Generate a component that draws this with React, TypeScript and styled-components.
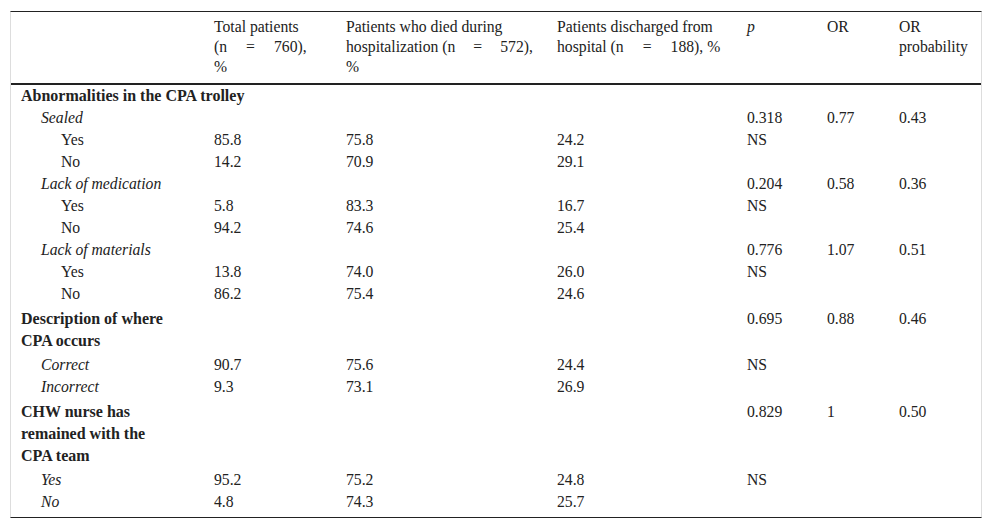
import styled, { createGlobalStyle } from "styled-components";

const GlobalStyle = createGlobalStyle`
  html, body {
    margin: 0;
    padding: 0;
    background: #fff;
  }
  body {
    font-family: "Liberation Serif", "Times New Roman", serif;
    color: #222;
  }
`;

const Page = styled.div`
  padding: 11px 10px 0;
`;

const Frame = styled.div`
  border-top: 1px solid #222;
  border-bottom: 1px solid #222;
  border-left: 1px solid #ddd;
  border-right: 1px solid #ddd;
`;

const Table = styled.table`
  width: 100%;
  border-collapse: collapse;
  table-layout: fixed;
  font-size: 15.7px;
`;

const HeadCell = styled.th<{ $italic?: boolean }>`
  text-align: left;
  vertical-align: top;
  font-weight: normal;
  font-style: ${(p) => (p.$italic ? "italic" : "normal")};
  line-height: 20px;
  padding: 5px 10px 6px;
  border-bottom: 2px solid #222;
  white-space: nowrap;
`;

const Eq = styled.span<{ $gap: number }>`
  margin: 0 ${(p) => p.$gap}px;
`;

const Cell = styled.td<{ $pad?: boolean; $last?: boolean }>`
  vertical-align: top;
  line-height: 22px;
  padding: ${(p) => (p.$pad ? "3px" : "0")} 10px
    ${(p) => (p.$last ? "4px" : p.$pad ? "2px" : "0")};
  white-space: nowrap;
`;

const Label = styled.span<{ $level: number; $bold?: boolean; $italic?: boolean }>`
  display: block;
  padding-left: ${(p) => p.$level * 20}px;
  font-weight: ${(p) => (p.$bold ? "bold" : "normal")};
  font-size: ${(p) => (p.$bold ? "16px" : "inherit")};
  font-style: ${(p) => (p.$italic ? "italic" : "normal")};
`;

type Kind = "head" | "cat" | "opt";

interface Row {
  label: string[];
  kind: Kind;
  cells?: string[];
  span?: boolean;
}

const rows: Row[] = [
  { label: ["Abnormalities in the CPA trolley"], kind: "head", span: true },
  { label: ["Sealed"], kind: "cat", cells: ["", "", "", "0.318", "0.77", "0.43"] },
  { label: ["Yes"], kind: "opt", cells: ["85.8", "75.8", "24.2", "NS", "", ""] },
  { label: ["No"], kind: "opt", cells: ["14.2", "70.9", "29.1", "", "", ""] },
  { label: ["Lack of medication"], kind: "cat", cells: ["", "", "", "0.204", "0.58", "0.36"] },
  { label: ["Yes"], kind: "opt", cells: ["5.8", "83.3", "16.7", "NS", "", ""] },
  { label: ["No"], kind: "opt", cells: ["94.2", "74.6", "25.4", "", "", ""] },
  { label: ["Lack of materials"], kind: "cat", cells: ["", "", "", "0.776", "1.07", "0.51"] },
  { label: ["Yes"], kind: "opt", cells: ["13.8", "74.0", "26.0", "NS", "", ""] },
  { label: ["No"], kind: "opt", cells: ["86.2", "75.4", "24.6", "", "", ""] },
  {
    label: ["Description of where", "CPA occurs"],
    kind: "head",
    cells: ["", "", "", "0.695", "0.88", "0.46"],
  },
  { label: ["Correct"], kind: "cat", cells: ["90.7", "75.6", "24.4", "NS", "", ""] },
  { label: ["Incorrect"], kind: "cat", cells: ["9.3", "73.1", "26.9", "", "", ""] },
  {
    label: ["CHW nurse has", "remained with the", "CPA team"],
    kind: "head",
    cells: ["", "", "", "0.829", "1", "0.50"],
  },
  { label: ["Yes"], kind: "cat", cells: ["95.2", "75.2", "24.8", "NS", "", ""] },
  { label: ["No"], kind: "cat", cells: ["4.8", "74.3", "25.7", "", "", ""] },
];

const widths = [193, 132, 211, 190, 80, 72, 92];

const levelOf = (k: Kind) => (k === "head" ? 0 : k === "cat" ? 1 : 2);

const App = () => {
  return (
    <Page>
      <GlobalStyle />
      <Frame>
        <Table>
          <colgroup>
            {widths.map((w, i) => (
              <col key={i} style={{ width: w }} />
            ))}
          </colgroup>
          <thead>
            <tr>
              <HeadCell />
              <HeadCell>
                Total patients
                <br />
                (n<Eq $gap={19}>=</Eq>760),
                <br />%
              </HeadCell>
              <HeadCell>
                Patients who died during
                <br />
                hospitalization (n<Eq $gap={18}>=</Eq>572),
                <br />%
              </HeadCell>
              <HeadCell>
                Patients discharged from
                <br />
                hospital (n<Eq $gap={19}>=</Eq>188), %
              </HeadCell>
              <HeadCell $italic>p</HeadCell>
              <HeadCell>OR</HeadCell>
              <HeadCell>
                OR
                <br />
                probability
              </HeadCell>
            </tr>
          </thead>
          <tbody>
            {rows.map((r, i) => {
              const multi = r.label.length > 1;
              const last = i === rows.length - 1;
              const label = (
                <Label
                  $level={levelOf(r.kind)}
                  $bold={r.kind === "head"}
                  $italic={r.kind === "cat"}
                >
                  {r.label.map((l, j) => (
                    <span key={j}>
                      {j > 0 && <br />}
                      {l}
                    </span>
                  ))}
                </Label>
              );
              if (r.span) {
                return (
                  <tr key={i}>
                    <Cell colSpan={7}>{label}</Cell>
                  </tr>
                );
              }
              return (
                <tr key={i}>
                  <Cell $pad={multi} $last={last}>
                    {label}
                  </Cell>
                  {(r.cells || []).map((c, j) => (
                    <Cell key={j} $pad={multi} $last={last}>
                      {c}
                    </Cell>
                  ))}
                </tr>
              );
            })}
          </tbody>
        </Table>
      </Frame>
    </Page>
  );
};

export default App;
